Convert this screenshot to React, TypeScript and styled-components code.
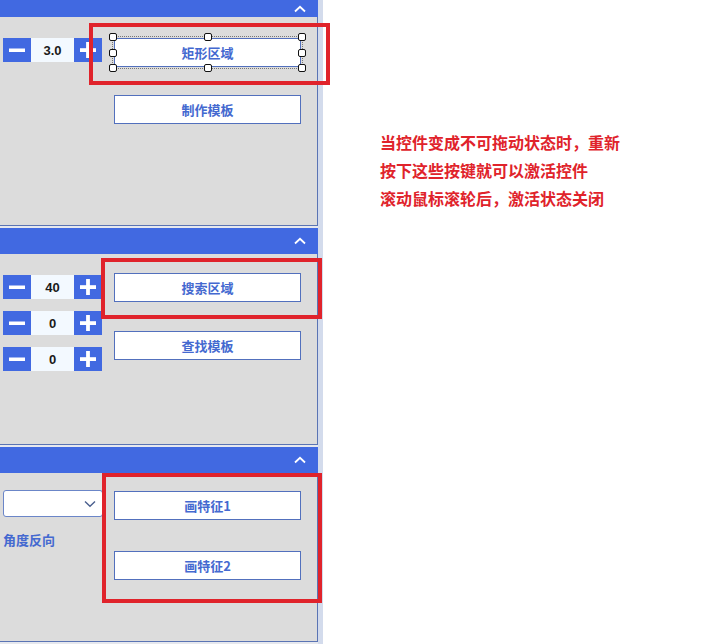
import React from 'react'
import styled, { createGlobalStyle } from 'styled-components'

const blue = '#4169e1'
const textBlue = '#4469d0'
const red = '#e0232b'

const GlobalStyle = createGlobalStyle`
  html, body {
    margin: 0;
    padding: 0;
    background: #ffffff;
  }
  body {
    font-family: "Noto Sans CJK SC", "Noto Sans", sans-serif;
  }
`

const Page = styled.div`
  position: relative;
  display: flex;
  width: 712px;
  height: 644px;
  overflow: hidden;
`

const Panel = styled.div`
  width: 318px;
  display: flex;
  flex-direction: column;
  gap: 2px;
  background: #e6e8ee;
`

const Section = styled.div`
  display: flex;
  flex-direction: column;
  flex-shrink: 0;
`

const Track = styled.div`
  width: 5px;
  background: #d3dbec;
`

const Header = styled.div<{ $h: number }>`
  height: ${({ $h }) => $h}px;
  background: ${blue};
  display: flex;
  align-items: center;
  justify-content: flex-end;
  padding-right: 12px;
`

const Body = styled.div<{ $h: number; $top: number }>`
  box-sizing: border-box;
  height: ${({ $h }) => $h}px;
  background: #dcdcdc;
  border-right: 1px solid #5a74b4;
  border-bottom: 1px solid #5a74b4;
  padding: ${({ $top }) => $top}px 0 0 3px;
  display: flex;
  gap: 11px;
`

const LeftCol = styled.div`
  width: 100px;
  display: flex;
  flex-direction: column;
  gap: 12px;
`

const RightCol = styled.div<{ $gap: number; $top?: number }>`
  display: flex;
  flex-direction: column;
  gap: ${({ $gap }) => $gap}px;
  margin-top: ${({ $top }) => $top || 0}px;
`

const Stepper = styled.div`
  display: flex;
  height: 24px;
  width: 100px;
`

const StepBtn = styled.div`
  width: 28px;
  background: ${blue};
  display: flex;
  align-items: center;
  justify-content: center;
`

const StepValue = styled.div`
  width: 43px;
  background: #f3f9ff;
  display: flex;
  align-items: center;
  justify-content: center;
  font-family: "Liberation Sans", "Noto Sans", sans-serif;
  font-weight: 700;
  font-size: 13px;
  color: #1a1a1a;
`

const ActionButton = styled.div`
  position: relative;
  box-sizing: border-box;
  width: 187px;
  height: 29px;
  background: #ffffff;
  border: 1px solid #5270bd;
  display: flex;
  align-items: center;
  justify-content: center;
  font-size: 13px;
  font-weight: 700;
  color: ${textBlue};
`

const Selection = styled.div`
  position: absolute;
  left: -3px;
  top: -3px;
  right: -3px;
  bottom: -3px;
  border: 1px dotted #777;
`

const Handle = styled.div<{ $x: string; $y: string }>`
  position: absolute;
  left: ${({ $x }) => $x};
  top: ${({ $y }) => $y};
  width: 6px;
  height: 6px;
  margin: -4px 0 0 -4px;
  background: #fff;
  border: 1px solid #111;
  border-radius: 2px;
`

const Combo = styled.div`
  box-sizing: border-box;
  width: 100px;
  height: 27px;
  background: #fff;
  border: 1px solid #6b86c8;
  border-radius: 3px;
  display: flex;
  align-items: center;
  justify-content: flex-end;
  padding-right: 6px;
`

const Label = styled.div`
  margin-top: 2px;
  font-size: 13px;
  line-height: 18px;
  font-weight: 700;
  color: ${textBlue};
`

const Notes = styled.div`
  padding: 128px 0 0 57px;
  font-size: 16px;
  font-weight: 700;
  line-height: 28px;
  color: ${red};
`

const Mark = styled.div<{ $x: number; $y: number; $w: number; $h: number }>`
  position: absolute;
  left: ${({ $x }) => $x}px;
  top: ${({ $y }) => $y}px;
  width: ${({ $w }) => $w}px;
  height: ${({ $h }) => $h}px;
  box-sizing: border-box;
  border: 4px solid ${red};
`

const ChevronUp = () => (
  <svg width="12" height="8" viewBox="0 0 12 8">
    <path d="M1 6.5 L6 1.8 L11 6.5" fill="none" stroke="#fff" strokeWidth="1.8" />
  </svg>
)

const ChevronDown = () => (
  <svg width="12" height="8" viewBox="0 0 12 8">
    <path d="M1 1.5 L6 6.2 L11 1.5" fill="none" stroke="#4a5f8e" strokeWidth="1.4" />
  </svg>
)

const Minus = () => (
  <svg width="16" height="16" viewBox="0 0 16 16">
    <rect x="0" y="6.5" width="16" height="3.5" fill="#fff" />
  </svg>
)

const Plus = () => (
  <svg width="16" height="16" viewBox="0 0 16 16">
    <rect x="0" y="6.2" width="16" height="3.8" fill="#fff" />
    <rect x="6.1" y="0" width="3.8" height="16" fill="#fff" />
  </svg>
)

function NumberBox({ value }: { value: string }) {
  return (
    <Stepper>
      <StepBtn><Minus /></StepBtn>
      <StepValue>{value}</StepValue>
      <StepBtn><Plus /></StepBtn>
    </Stepper>
  )
}

const handles = [
  ['0%', '0%'], ['50%', '0%'], ['100%', '0%'],
  ['0%', '50%'], ['100%', '50%'],
  ['0%', '100%'], ['50%', '100%'], ['100%', '100%']
]

export default function App() {
  return (
    <Page>
      <GlobalStyle />
      <Panel>
        <Section>
          <Header $h={17}><ChevronUp /></Header>
          <Body $h={209} $top={21}>
            <LeftCol>
              <NumberBox value="3.0" />
            </LeftCol>
            <RightCol $gap={28}>
              <ActionButton>
                矩形区域
                <Selection>
                  {handles.map(([x, y]) => (
                    <Handle key={x + y} $x={x} $y={y} />
                  ))}
                </Selection>
              </ActionButton>
              <ActionButton>制作模板</ActionButton>
            </RightCol>
          </Body>
        </Section>
        <Section>
          <Header $h={26}><ChevronUp /></Header>
          <Body $h={191} $top={21}>
            <LeftCol>
              <NumberBox value="40" />
              <NumberBox value="0" />
              <NumberBox value="0" />
            </LeftCol>
            <RightCol $gap={29} $top={-2}>
              <ActionButton>搜索区域</ActionButton>
              <ActionButton>查找模板</ActionButton>
            </RightCol>
          </Body>
        </Section>
        <Section>
          <Header $h={26}><ChevronUp /></Header>
          <Body $h={169} $top={17}>
            <LeftCol>
              <Combo><ChevronDown /></Combo>
              <Label>角度反向</Label>
            </LeftCol>
            <RightCol $gap={31} $top={1}>
              <ActionButton>画特征1</ActionButton>
              <ActionButton>画特征2</ActionButton>
            </RightCol>
          </Body>
        </Section>
      </Panel>
      <Track />
      <Notes>
        <div>当控件变成不可拖动状态时，重新</div>
        <div>按下这些按键就可以激活控件</div>
        <div>滚动鼠标滚轮后，激活状态关闭</div>
      </Notes>
      <Mark $x={89} $y={23} $w={241} $h={62} />
      <Mark $x={101} $y={258} $w={221} $h={61} />
      <Mark $x={102} $y={473} $w={220} $h={130} />
    </Page>
  )
}
